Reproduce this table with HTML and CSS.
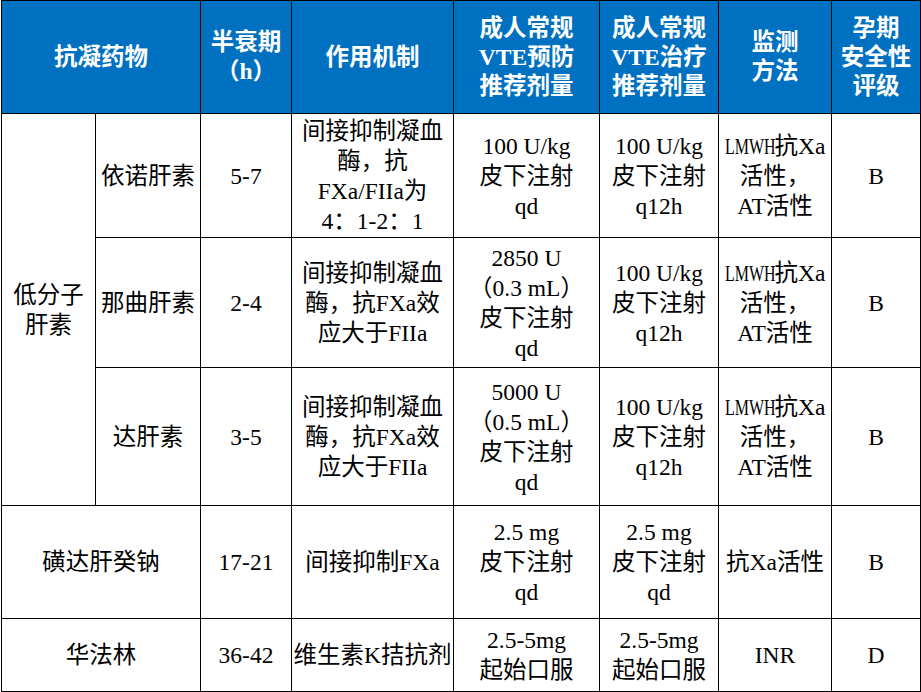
FILE: index.html
```html
<!DOCTYPE html>
<html lang="zh-CN">
<head>
<meta charset="utf-8">
<title>抗凝药物</title>
<link rel="stylesheet" href="styles.css">
</head>
<body>
<table class="drug-table">
  <colgroup>
    <col class="c1"><col class="c2"><col class="c3"><col class="c4"><col class="c5"><col class="c6"><col class="c7"><col class="c8">
  </colgroup>
  <thead>
    <tr class="r-head">
      <th colspan="2">抗凝药物</th>
      <th>半衰期<br>（h）</th>
      <th>作用机制</th>
      <th>成人常规<br>VTE预防<br>推荐剂量</th>
      <th>成人常规<br>VTE治疗<br>推荐剂量</th>
      <th>监测<br>方法</th>
      <th>孕期<br>安全性<br>评级</th>
    </tr>
  </thead>
  <tbody>
    <tr class="r1">
      <td rowspan="3">低分子<br>肝素</td>
      <td>依诺肝素</td>
      <td>5-7</td>
      <td>间接抑制凝血<br>酶，抗<br>FXa/FIIa为<br>4：1-2：1</td>
      <td>100 U/kg<br>皮下注射<br>qd</td>
      <td>100 U/kg<br>皮下注射<br>q12h</td>
      <td><span class="cond">LMWH</span>抗Xa<br>活性，<br>AT活性</td>
      <td>B</td>
    </tr>
    <tr class="r2">
      <td>那曲肝素</td>
      <td>2-4</td>
      <td>间接抑制凝血<br>酶，抗FXa效<br>应大于FIIa</td>
      <td>2850 U<br>（0.3 mL）<br>皮下注射<br>qd</td>
      <td>100 U/kg<br>皮下注射<br>q12h</td>
      <td><span class="cond">LMWH</span>抗Xa<br>活性，<br>AT活性</td>
      <td>B</td>
    </tr>
    <tr class="r3">
      <td>达肝素</td>
      <td>3-5</td>
      <td>间接抑制凝血<br>酶，抗FXa效<br>应大于FIIa</td>
      <td>5000 U<br>（0.5 mL）<br>皮下注射<br>qd</td>
      <td>100 U/kg<br>皮下注射<br>q12h</td>
      <td><span class="cond">LMWH</span>抗Xa<br>活性，<br>AT活性</td>
      <td>B</td>
    </tr>
    <tr class="r4">
      <td colspan="2">磺达肝癸钠</td>
      <td>17-21</td>
      <td>间接抑制FXa</td>
      <td>2.5 mg<br>皮下注射<br>qd</td>
      <td>2.5 mg<br>皮下注射<br>qd</td>
      <td>抗Xa活性</td>
      <td>B</td>
    </tr>
    <tr class="r5">
      <td colspan="2">华法林</td>
      <td>36-42</td>
      <td>维生素K拮抗剂</td>
      <td>2.5-5mg<br>起始口服</td>
      <td>2.5-5mg<br>起始口服</td>
      <td>INR</td>
      <td>D</td>
    </tr>
  </tbody>
</table>
</body>
</html>
```

FILE: styles.css
```css
html, body {
  margin: 0;
  padding: 0;
  background: #ffffff;
}

.drug-table {
  border-collapse: collapse;
  table-layout: fixed;
  width: 920px;
  margin: 0 0 0 1px;
  font-family: "Liberation Serif", "Noto Sans CJK SC", serif;
  font-size: 23.5px;
  line-height: 30px;
  color: #000000;
}

.c1 { width: 94px; }
.c2 { width: 105px; }
.c3 { width: 91px; }
.c4 { width: 162px; }
.c5 { width: 146px; }
.c6 { width: 119px; }
.c7 { width: 113px; }
.c8 { width: 89px; }

.drug-table th,
.drug-table td {
  border: 1px solid #000000;
  padding: 0;
  text-align: center;
  vertical-align: middle;
  white-space: nowrap;
  overflow: hidden;
}

.drug-table th {
  background: #0070c0;
  color: #ffffff;
  font-weight: bold;
  line-height: 29px;
}

.cond {
  display: inline-block;
  width: 50px;
  transform: scaleX(0.68);
  transform-origin: left center;
  text-align: left;
  white-space: nowrap;
}

.r-head { height: 113px; }
.r1 { height: 124px; }
.r2 { height: 130px; }
.r3 { height: 138px; }
.r4 { height: 113px; }
.r5 { height: 73px; }
```
